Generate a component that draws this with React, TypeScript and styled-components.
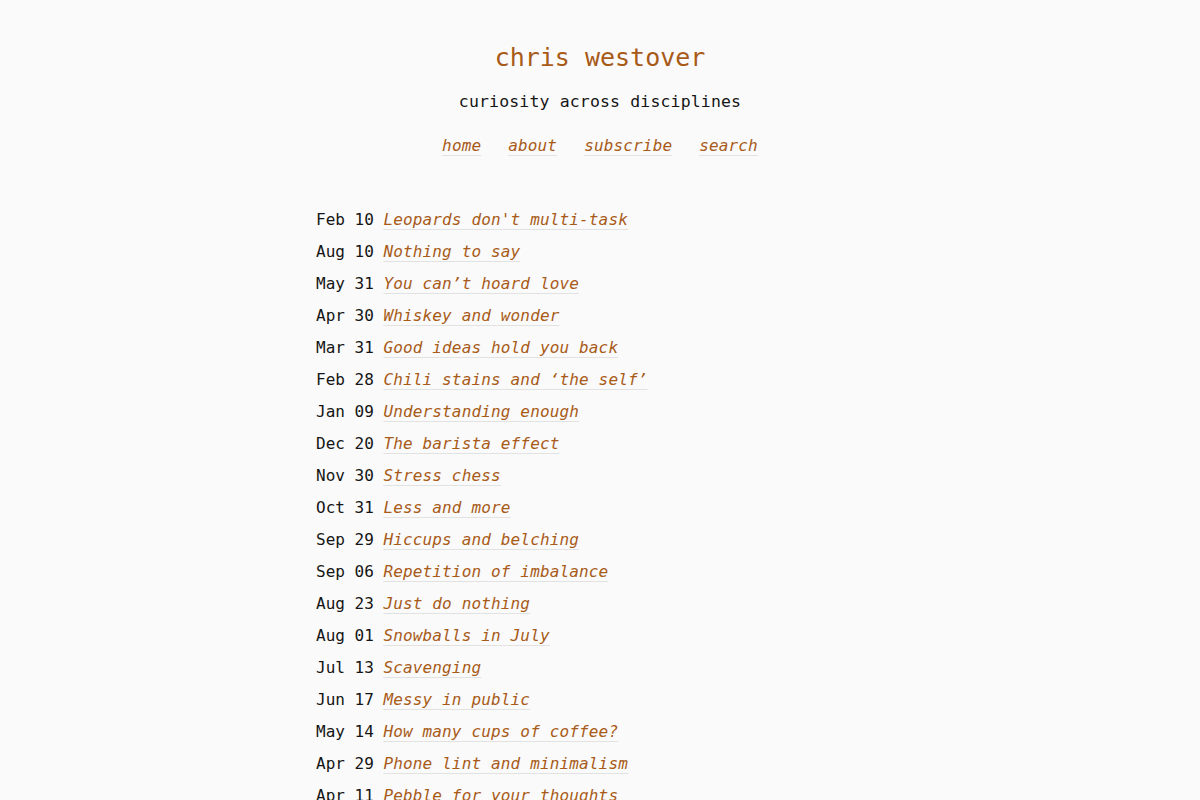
import styled, { createGlobalStyle } from 'styled-components';

const GlobalStyle = createGlobalStyle`
  html, body {
    margin: 0;
    padding: 0;
    background-color: #fafafa;
  }

  body {
    font-family: "DejaVu Sans Mono", "Liberation Mono", monospace;
    color: #151515;
    font-size: 16px;
  }
`;

const Page = styled.div`
  display: flex;
  flex-direction: column;
  align-items: center;
  padding-top: 43px;
`;

const Header = styled.header`
  display: flex;
  flex-direction: column;
  align-items: center;
`;

const SiteTitle = styled.h1`
  margin: 0;
  font-size: 25px;
  line-height: 30px;
  font-weight: normal;
  color: #a85a18;
`;

const Tagline = styled.p`
  margin: 16px 0 0;
  font-size: 16.5px;
  line-height: 26px;
  letter-spacing: 0.15px;
  color: #151515;
`;

const Nav = styled.nav`
  display: flex;
  gap: 27px;
  margin-top: 19px;
  line-height: 24px;
`;

const Link = styled.a`
  color: #a85a18;
  font-style: italic;
  letter-spacing: 0.15px;
  text-decoration: underline;
  text-decoration-color: #e2e2e2;
  text-decoration-thickness: 1px;
  text-underline-offset: 4px;
  cursor: pointer;
`;

const PostList = styled.ul`
  list-style: none;
  margin: 46px 0 0;
  padding: 0;
  width: 568px;
`;

const PostRow = styled.li`
  display: flex;
  gap: 9.6px;
  line-height: 32px;
`;

const PostDate = styled.span`
  color: #151515;
  white-space: pre;
`;

const posts = [
  { date: 'Feb 10', title: "Leopards don't multi-task" },
  { date: 'Aug 10', title: 'Nothing to say' },
  { date: 'May 31', title: 'You can’t hoard love' },
  { date: 'Apr 30', title: 'Whiskey and wonder' },
  { date: 'Mar 31', title: 'Good ideas hold you back' },
  { date: 'Feb 28', title: 'Chili stains and ‘the self’' },
  { date: 'Jan 09', title: 'Understanding enough' },
  { date: 'Dec 20', title: 'The barista effect' },
  { date: 'Nov 30', title: 'Stress chess' },
  { date: 'Oct 31', title: 'Less and more' },
  { date: 'Sep 29', title: 'Hiccups and belching' },
  { date: 'Sep 06', title: 'Repetition of imbalance' },
  { date: 'Aug 23', title: 'Just do nothing' },
  { date: 'Aug 01', title: 'Snowballs in July' },
  { date: 'Jul 13', title: 'Scavenging' },
  { date: 'Jun 17', title: 'Messy in public' },
  { date: 'May 14', title: 'How many cups of coffee?' },
  { date: 'Apr 29', title: 'Phone lint and minimalism' },
  { date: 'Apr 11', title: 'Pebble for your thoughts' },
];

function App() {
  return (
    <>
      <GlobalStyle />
      <Page>
        <Header>
          <SiteTitle>chris westover</SiteTitle>
          <Tagline>curiosity across disciplines</Tagline>
          <Nav>
            <Link>home</Link>
            <Link>about</Link>
            <Link>subscribe</Link>
            <Link>search</Link>
          </Nav>
        </Header>
        <PostList>
          {posts.map(post => (
            <PostRow key={post.date + post.title}>
              <PostDate>{post.date}</PostDate>
              <Link>{post.title}</Link>
            </PostRow>
          ))}
        </PostList>
      </Page>
    </>
  );
}

export default App;
